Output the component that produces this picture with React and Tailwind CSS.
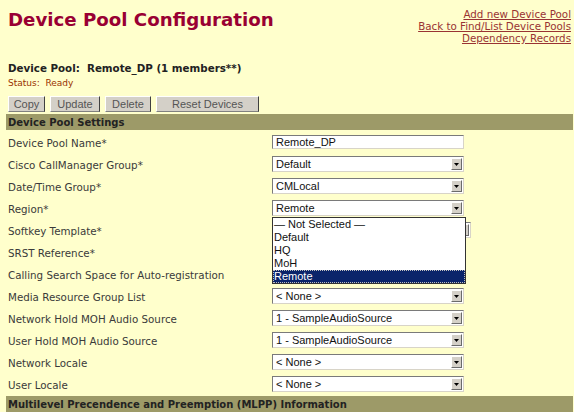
import React from 'react'

const rows = [
  { label: 'Device Pool Name*', kind: 'text', value: 'Remote_DP' },
  { label: 'Cisco CallManager Group*', value: 'Default' },
  { label: 'Date/Time Group*', value: 'CMLocal' },
  { label: 'Region*', value: 'Remote', open: true },
  // these three sit under the open Region list, so their text is hidden
  { label: 'Softkey Template*', value: '', wide: true },
  { label: 'SRST Reference*', value: '' },
  { label: 'Calling Search Space for Auto-registration', value: '' },
  { label: 'Media Resource Group List', value: '< None >' },
  { label: 'Network Hold MOH Audio Source', value: '1 - SampleAudioSource' },
  { label: 'User Hold MOH Audio Source', value: '1 - SampleAudioSource' },
  { label: 'Network Locale', value: '< None >' },
  { label: 'User Locale', value: '< None >' },
]

const regionOptions = ['— Not Selected —', 'Default', 'HQ', 'MoH', 'Remote']

function Arrow() {
  return (
    <div className="flex items-center justify-center w-[11px] h-[12px] bg-[#d4d0c8] border-t border-l border-t-white border-l-white border-r border-b border-r-[#6b6b6b] border-b-[#6b6b6b]">
      <svg width="5" height="3" viewBox="0 0 5 3">
        <path d="M0 0h5L2.5 3z" fill="#000" />
      </svg>
    </div>
  )
}

function Select({ value, wide }) {
  return (
    <div className={`flex items-center justify-between h-[16px] bg-white border border-t-[#7a7a7a] border-l-[#7a7a7a] border-r-[#d8d4c8] border-b-[#d8d4c8] pl-[3px] pr-px ${wide ? 'w-[199px]' : 'w-[192px]'}`}>
      <span className="text-[11px] leading-none text-[#111] font-['Liberation_Sans',Arial,sans-serif] whitespace-nowrap">{value}</span>
      <Arrow />
    </div>
  )
}

function Button({ children, w }) {
  return (
    <div className={`flex items-center justify-center h-[16px] ${w} bg-[#d4d0c8] border-t border-l border-t-white border-l-white border-r border-b border-r-[#404040] border-b-[#808080] text-[11px] text-[#555] font-['Liberation_Sans',Arial,sans-serif]`}>
      {children}
    </div>
  )
}

export default function App() {
  return (
    <div className="w-[574px] min-h-[412px] bg-[#ffffcc] font-['DejaVu_Sans',Verdana,sans-serif] text-[#333] overflow-hidden">
      {/* Header */}
      <div className="flex justify-between items-start pt-[8px] pl-[8px] pr-[3px]">
        <h1 className="mt-[3px] text-[18.2px] leading-[18px] font-bold text-[#990033]">Device Pool Configuration</h1>
        <div className="flex flex-col items-end text-[10.3px] leading-[12px] text-[#993333]">
          <a className="underline">Add new Device Pool</a>
          <a className="underline">Back to Find/List Device Pools</a>
          <a className="underline">Dependency Records</a>
        </div>
      </div>

      <div className="pl-[8px]">
        <p className="mt-[18px] text-[10.3px] leading-[13px] font-bold text-[#222] whitespace-pre">Device Pool:  Remote_DP (1 members**)</p>
        <p className="mt-[3px] text-[9px] leading-[11px] text-[#993300] whitespace-pre">Status:  Ready</p>
        <div className="mt-[7px] flex gap-[5px]">
          <Button w="w-[37px]">Copy</Button>
          <Button w="w-[50px]">Update</Button>
          <Button w="w-[46px]">Delete</Button>
          <Button w="w-[103px]">Reset Devices</Button>
        </div>
      </div>

      {/* Device Pool Settings */}
      <div className="mt-[2px] ml-[6px] mr-px h-[16px] bg-[#9d9a68] flex items-center pl-[2px] text-[10px] font-bold text-[#222]">
        Device Pool Settings
      </div>

      <div className="mt-px pl-[8px]">
        {rows.map((r) => (
          <div key={r.label} className="grid grid-cols-[264px_1fr] h-[22px] items-center">
            <span className="pt-[2px] text-[10.3px] leading-none text-[#3a3a3a] whitespace-nowrap">{r.label}</span>
            <div className="relative">
              {r.kind === 'text' ? (
                <div className="flex items-center w-[192px] h-[14px] bg-white border border-t-[#7a7a7a] border-l-[#7a7a7a] border-r-[#d8d4c8] border-b-[#d8d4c8] pl-[3px] text-[11px] leading-none text-[#111] font-['Liberation_Sans',Arial,sans-serif]">
                  {r.value}
                </div>
              ) : (
                <Select value={r.value} wide={r.wide} />
              )}
              {r.open && (
                <div className="absolute z-10 left-0 top-[17px] w-[194px] bg-white border border-[#333] font-['Liberation_Sans',Arial,sans-serif] text-[11px] text-[#111]">
                  {regionOptions.map((o) => (
                    <div
                      key={o}
                      className={`h-[13px] leading-[13px] pl-px ${o === 'Remote' ? 'bg-[#0a246a] text-white outline-1 outline-dotted outline-[#c0c0c0] -outline-offset-1' : ''}`}
                    >
                      {o}
                    </div>
                  ))}
                </div>
              )}
            </div>
          </div>
        ))}
      </div>

      {/* MLPP */}
      <div className="mt-px ml-[6px] mr-px h-[16px] bg-[#9d9a68] flex items-center pl-[2px] text-[10px] font-bold text-[#222]">
        Multilevel Precendence and Preemption (MLPP) Information
      </div>
    </div>
  )
}
